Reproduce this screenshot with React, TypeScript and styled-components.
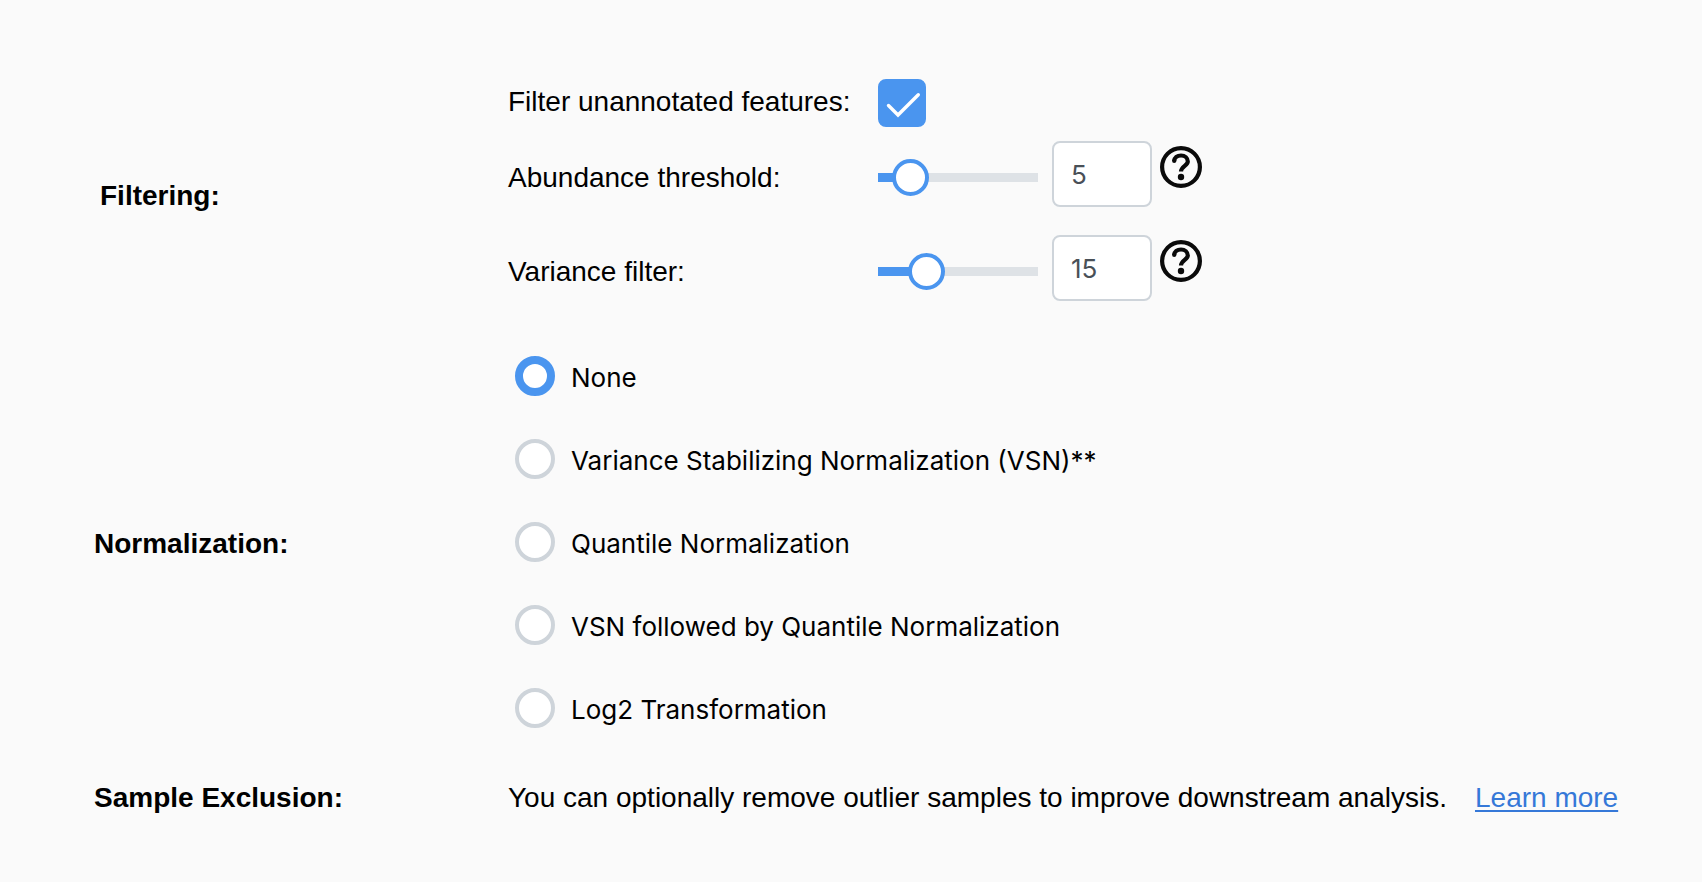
import React, { useState } from "react";
import styled, { createGlobalStyle } from "styled-components";

const GlobalStyle = createGlobalStyle`
  *, *::before, *::after { box-sizing: border-box; }
  body {
    margin: 0;
    background: #fafafa;
    color: #000;
    font: 28px/32px "Liberation Sans", Arial, sans-serif;
  }
`;

const Form = styled.form`
  display: flex;
  flex-direction: column;
  gap: 44px;
  padding: 79px 64px 62px 94px;
`;

const Section = styled.section`
  display: grid;
  grid-template-columns: minmax(0, 414px) minmax(0, 1fr);
  align-items: center;
  min-height: 44px;
`;

const SectionTitle = styled.h2<{ $indent?: boolean }>`
  margin: 0;
  padding-left: ${(p) => (p.$indent ? 6 : 0)}px;
  font-size: 28px;
  font-weight: 700;
  line-height: 32px;
`;

const FilterList = styled.div`
  display: flex;
  flex-direction: column;
  padding-bottom: 4px;
`;

const FilterRow = styled.div`
  display: grid;
  grid-template-columns: minmax(0, 370px) auto;
  justify-content: start;
  align-items: center;
  min-height: 73px;

  & + & { margin-top: 21px; }
`;

const CheckRow = styled(FilterRow)`
  min-height: 48px;
  margin-bottom: 14px;

  label { padding-bottom: 2px; }

  & + ${FilterRow} { margin-top: 0; }
`;

const CheckControl = styled.span`
  display: grid;
  width: 48px;
  height: 48px;

  & > * { grid-area: 1 / 1; }
`;

const Checkbox = styled.input`
  appearance: none;
  width: 48px;
  height: 48px;
  margin: 0;
  border: 2px solid #ced4da;
  border-radius: 8px;
  background: #fff;

  &:checked {
    border-color: #4a95ef;
    background: #4a95ef;
  }
`;

const CheckMark = styled.svg`
  width: 48px;
  height: 48px;
  pointer-events: none;
`;

const SliderControls = styled.div`
  display: flex;
  align-items: flex-start;
`;

const SliderTrack = styled.div`
  display: flex;
  align-items: center;
  width: 160px;
  height: 73px;
  margin-right: 14px;
`;

const Slider = styled.input.attrs({ type: "range" })`
  appearance: none;
  flex: none;
  width: 197px;
  height: 37px;
  margin: 0 -18px;
  background: linear-gradient(
      to right,
      #4a95ef var(--filled),
      #dee2e6 var(--filled)
    )
    18px center / 160px 9px no-repeat;

  &::-webkit-slider-thumb {
    appearance: none;
    width: 37px;
    height: 37px;
    border: 4px solid #4a95ef;
    border-radius: 50%;
    background: #fff;
  }
`;

const NumberBox = styled.input`
  width: 100px;
  height: 66px;
  margin-right: 8px;
  padding: 0 17px;
  border: 2px solid #ced4da;
  border-radius: 8px;
  background: #fff;
  color: #495057;
  font: 26px/32px Inter, sans-serif;
`;

const HelpButton = styled.button`
  display: block;
  margin: 5px 0 0;
  padding: 0;
  border: 0;
  background: none;

  svg { display: block; width: 42px; height: 42px; }
`;

const RadioList = styled.div`
  display: flex;
  flex-direction: column;
  gap: 43px;
  padding: 0 0 4px 7px;
`;

const RadioOption = styled.label`
  display: flex;
  align-items: center;
  gap: 16px;
  min-height: 40px;
  font: 26px/32px Inter, sans-serif;

  span { padding-top: 4px; }
`;

const Radio = styled.input`
  appearance: none;
  flex: none;
  width: 40px;
  height: 40px;
  margin: 0;
  border: 4px solid #ced4da;
  border-radius: 50%;
  background: #fff;

  &:checked { border: 8px solid #4a95ef; }
`;

const Note = styled.div`
  display: flex;
  flex-wrap: wrap;
  column-gap: 28px;

  p { margin: 0; }
`;

const NoteLink = styled.a`
  color: #3578d8;
  text-decoration: underline;
  text-decoration-thickness: 2px;
  text-underline-offset: 3px;
`;

function HelpIcon() {
  return (
    <svg viewBox="0 0 42 42" fill="none" stroke="#0a0a0a" aria-hidden="true">
      <circle cx="21" cy="21" r="18.9" strokeWidth="4.2" />
      <path
        d="M14.2 15.2C14.4 11.6 17.3 9.5 21 9.5C25 9.5 27.8 12 27.8 15.6C27.8 19.6 21 20.4 21 25.6"
        strokeWidth="4.2"
      />
      <circle cx="14.2" cy="14.9" r="2.1" fill="#0a0a0a" stroke="none" />
      <circle cx="21" cy="31" r="3.2" fill="#0a0a0a" stroke="none" />
    </svg>
  );
}

interface FilterSliderProps {
  id: string;
  label: string;
  initial: number;
  max: number;
}

function FilterSlider({ id, label, initial, max }: FilterSliderProps) {
  const [value, setValue] = useState(initial);
  const filled = { "--filled": `${(value / max) * 100}%` } as React.CSSProperties;
  const update = (e: React.ChangeEvent<HTMLInputElement>) =>
    setValue(Math.min(max, Number(e.target.value) || 0));

  return (
    <FilterRow>
      <label htmlFor={id}>{label}:</label>
      <SliderControls>
        <SliderTrack>
          <Slider id={id} min={0} max={max} value={value} onChange={update} style={filled} />
        </SliderTrack>
        <NumberBox
          type="text"
          inputMode="numeric"
          aria-label={`${label} value`}
          value={value}
          onChange={update}
        />
        <HelpButton type="button" aria-label={`About ${label.toLowerCase()}`}>
          <HelpIcon />
        </HelpButton>
      </SliderControls>
    </FilterRow>
  );
}

const METHODS = [
  "None",
  "Variance Stabilizing Normalization (VSN)**",
  "Quantile Normalization",
  "VSN followed by Quantile Normalization",
  "Log2 Transformation",
];

export default function App() {
  const [unannotated, setUnannotated] = useState(true);
  const [method, setMethod] = useState(METHODS[0]);

  return (
    <>
      <GlobalStyle />
      <Form>
        <Section>
          <SectionTitle $indent>Filtering:</SectionTitle>
          <FilterList>
            <CheckRow>
              <label htmlFor="unannotated">Filter unannotated features:</label>
              <CheckControl>
                <Checkbox
                  id="unannotated"
                  type="checkbox"
                  checked={unannotated}
                  onChange={(e) => setUnannotated(e.target.checked)}
                />
                {unannotated && (
                  <CheckMark viewBox="0 0 48 48" aria-hidden="true">
                    <path
                      d="M10.5 26.5L20 36L40.3 15.7"
                      fill="none"
                      stroke="#fff"
                      strokeWidth="3.4"
                      strokeLinecap="round"
                    />
                  </CheckMark>
                )}
              </CheckControl>
            </CheckRow>
            <FilterSlider id="abundance" label="Abundance threshold" initial={5} max={25} />
            <FilterSlider id="variance" label="Variance filter" initial={15} max={50} />
          </FilterList>
        </Section>

        <Section>
          <SectionTitle id="normalization">Normalization:</SectionTitle>
          <RadioList role="radiogroup" aria-labelledby="normalization">
            {METHODS.map((name) => (
              <RadioOption key={name}>
                <Radio
                  type="radio"
                  name="method"
                  checked={method === name}
                  onChange={() => setMethod(name)}
                />
                <span>{name}</span>
              </RadioOption>
            ))}
          </RadioList>
        </Section>

        <Section>
          <SectionTitle>Sample Exclusion:</SectionTitle>
          <Note>
            <p>You can optionally remove outlier samples to improve downstream analysis.</p>
            <NoteLink href="#learn-more">Learn more</NoteLink>
          </Note>
        </Section>
      </Form>
    </>
  );
}
